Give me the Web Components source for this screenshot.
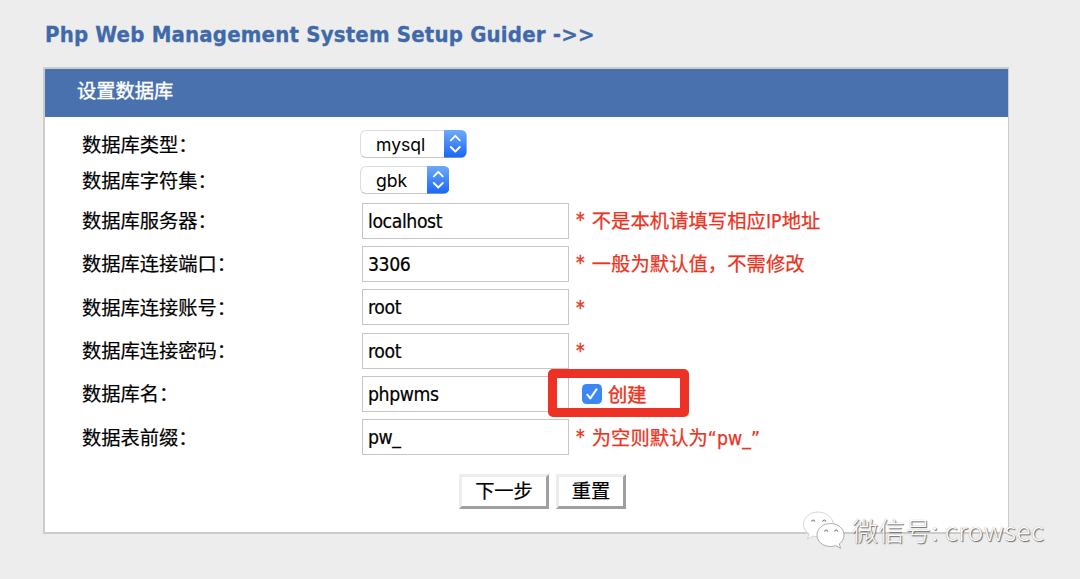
<!DOCTYPE html>
<html lang="zh-CN">
<head>
<meta charset="utf-8">
<title>Php Web Management System Setup Guider</title>
<style>
	body {
		margin: 0;
		background: #ededed;
		font: 19.25px/24px "DejaVu Sans Condensed", "DejaVu Sans", "Noto Sans CJK SC", sans-serif;
		font-stretch: condensed;
		color: #000;
	}
</style>
</head>
<body>
<setup-page heading="Php Web Management System Setup Guider -&gt;&gt;">
	<setup-panel heading="设置数据库">
		<form-row label="数据库类型" size="short"><select-box value="mysql" style="--width: 106.5px"></select-box></form-row>
		<form-row label="数据库字符集" size="short"><select-box value="gbk" style="--width: 89px"></select-box></form-row>
		<form-row label="数据库服务器" style="margin-top: 1px"><text-box value="localhost"></text-box><form-hint>不是本机请填写相应IP地址</form-hint></form-row>
		<form-row label="数据库连接端口"><text-box value="3306"></text-box><form-hint>一般为默认值，不需修改</form-hint></form-row>
		<form-row label="数据库连接账号"><text-box value="root"></text-box><form-hint></form-hint></form-row>
		<form-row label="数据库连接密码"><text-box value="root"></text-box><form-hint></form-hint></form-row>
		<form-row label="数据库名"><text-box value="phpwms"></text-box><check-box>创建</check-box></form-row>
		<form-row label="数据表前缀"><text-box value="pw_"></text-box><form-hint>为空则默认为“pw_”</form-hint></form-row>
		<push-button slot="actions" style="--width: 90px">下一步</push-button>
		<push-button slot="actions" style="--width: 70px">重置</push-button>
	</setup-panel>
	<water-mark slot="overlay">微信号: crowsec</water-mark>
</setup-page>

<script>
/**
 * Base element, renders its template in an open shadow root.
 */
class BaseElement extends HTMLElement {
	constructor() {
		super();

		/**
		 * @type {ShadowRoot}
		 */
		this.shadow = this.attachShadow({ mode: 'open' });
	}

	connectedCallback() {
		this.shadow.innerHTML = this.render();
	}

	/**
	 * @param {string} name - attribute name.
	 * @returns {string}
	 */
	attr(name) {
		return (this.getAttribute(name) || '').replace(/</g, '&lt;');
	}
}

/**
 * Page with a heading and an overlay layer.
 */
class SetupPage extends BaseElement {
	render() {
		return `
    <style>
        :host {
          display: block;
          position: relative;
          box-sizing: border-box;
          height: 579px;
          padding: 20px 71px 0 43px;
          overflow: hidden;
        }
        h1 {
          margin: 0 0 18px 2px;
          font-size: 22px;
          line-height: 29px;
          letter-spacing: 0.18px;
          color: #4069aa;
          -webkit-text-stroke: 0.3px;
          white-space: nowrap;
        }
    </style>
    <h1>${this.attr('heading')}</h1>
    <slot></slot>
    <slot name="overlay"></slot>
    `;
	}
}

/**
 * White panel with a blue title bar.
 */
class SetupPanel extends BaseElement {
	render() {
		return `
    <style>
        :host {
          display: block;
          box-sizing: border-box;
          height: 467px;
          border: 2px solid #cbcccb;
          border-right-width: 1px;
          background: #fff;
        }
        header {
          height: 48px;
          padding-left: 32px;
          background: #4871ae;
          color: #fff;
          line-height: 45px;
          -webkit-text-stroke: 0.4px;
        }
        main {
          padding: 9px 0 0 37px;
        }
        footer {
          display: flex;
          gap: 7px;
          padding: 15px 0 0 414px;
        }
    </style>
    <header>${this.attr('heading')}</header>
    <main><slot></slot></main>
    <footer><slot name="actions"></slot></footer>
    `;
	}
}

/**
 * Label column and control column.
 */
class FormRow extends BaseElement {
	render() {
		return `
    <style>
        :host {
          display: grid;
          grid-template-columns: 278px 1fr;
          align-items: center;
          height: 43.3px;
        }
        :host([size="short"]) {
          height: 36px;
        }
        label {
          padding-top: 3px;
          font-feature-settings: "halt";
          -webkit-text-stroke: 0.2px;
        }
        .field {
          display: flex;
          align-items: center;
        }
    </style>
    <label>${this.attr('label')}：</label>
    <div class="field"><slot></slot></div>
    `;
	}
}

/**
 * Select with the blue stepper cap.
 */
class SelectBox extends BaseElement {
	render() {
		return `
    <style>
        :host {
          display: flex;
          justify-content: space-between;
          box-sizing: border-box;
          width: var(--width);
          height: 28px;
          padding-left: 15px;
          border: 1px solid #dcdcdc;
          border-bottom-color: #c6c6c6;
          border-radius: 6px;
          background: #fff;
          font: 17.6px/27px Inter, sans-serif;
        }
        svg {
          width: 22.5px;
          height: 28px;
          margin: -1px;
          flex: none;
        }
    </style>
    <span>${this.attr('value')}</span>
    <svg viewBox="0 0 22.5 28">
      <defs><linearGradient id="cap" x2="0" y2="1">
        <stop offset="0" stop-color="#6caaf9"/><stop offset="1" stop-color="#1a67f5"/>
      </linearGradient></defs>
      <path d="M0 0H17a5.5 5.5 0 0 1 5.5 5.5V22a5.5 5.5 0 0 1-5.5 5.5H0z" fill="url(#cap)"/>
      <path d="M6.8 10.3L11.3 5.8l4.5 4.5M6.8 17l4.5 4.5 4.5-4.5" fill="none" stroke="#fff" stroke-width="1.9" stroke-linecap="round" stroke-linejoin="round"/>
    </svg>
    `;
	}
}

/**
 * Single line text field.
 */
class TextBox extends BaseElement {
	render() {
		return `
    <style>
        :host {
          display: block;
          box-sizing: border-box;
          width: 207px;
          height: 36px;
          margin-left: 2px;
          padding-left: 5px;
          border: 1px solid #c6c6c6;
          background: #fff;
          line-height: 36px;
          letter-spacing: -0.4px;
          -webkit-text-stroke: 0.2px;
        }
    </style>
    ${this.attr('value')}
    `;
	}
}

/**
 * Red note after a field, led by the required mark.
 */
class FormHint extends BaseElement {
	render() {
		return `
    <style>
        :host {
          display: flex;
          gap: 7px;
          margin-left: 7px;
          padding-top: 3px;
          color: #e93323;
          letter-spacing: 0.1px;
          white-space: nowrap;
          -webkit-text-stroke: 0.25px;
        }
        .mark {
          margin-top: -2px;
          -webkit-text-stroke: 0.4px;
        }
    </style>
    <span class="mark">*</span>
    <span><slot></slot></span>
    `;
	}
}

/**
 * Checked box and its label, with a red marker frame laid over it.
 */
class CheckBox extends BaseElement {
	render() {
		return `
    <style>
        :host {
          display: flex;
          position: relative;
          align-items: center;
          gap: 6px;
          margin-left: 13px;
          color: #e93323;
        }
        svg {
          width: 20px;
          height: 20px;
        }
        span {
          padding-top: 2px;
          margin-bottom: -2px;
          -webkit-text-stroke: 0.4px;
        }
        .frame {
          position: absolute;
          left: -34px;
          top: -12.5px;
          box-sizing: border-box;
          width: 141px;
          height: 48px;
          border: 9px solid #ed3125;
          border-radius: 5px;
        }
    </style>
    <svg viewBox="0 0 20 20">
      <rect width="20" height="20" rx="4.5" fill="#3d87f5"/>
      <path d="M5.3 10.7l3 3.7 6.2-9" fill="none" stroke="#fff" stroke-width="2" stroke-linecap="round" stroke-linejoin="round"/>
    </svg>
    <span><slot></slot></span>
    <div class="frame"></div>
    `;
	}
}

/**
 * Bevelled button.
 */
class PushButton extends BaseElement {
	render() {
		return `
    <style>
        :host {
          display: block;
          box-sizing: border-box;
          width: var(--width);
          height: 35px;
          border: 3px solid;
          border-color: #ededed #a0a0a0 #a0a0a0 #ededed;
          background: #fff;
          line-height: 29px;
          text-align: center;
          -webkit-text-stroke: 0.2px;
        }
    </style>
    <slot></slot>
    `;
	}
}

/**
 * Chat logo and account name in the corner.
 */
class WaterMark extends BaseElement {
	render() {
		return `
    <style>
        :host {
          display: flex;
          position: absolute;
          left: 802px;
          top: 510px;
          gap: 6px;
          align-items: center;
          color: #fff;
          font: 300 26px/40px "Noto Sans CJK SC", sans-serif;
          letter-spacing: 0.5px;
          text-shadow: 1px 1px 1px #666, 0 0 1px #999;
          white-space: nowrap;
        }
        svg {
          width: 44px;
          height: 40px;
        }
    </style>
    <svg viewBox="0 0 44 40" fill="#fff" stroke="#999" stroke-width="0.8">
      <path d="M16 2C8 2 1.5 7.3 1.5 14.5c0 4 2 7.3 5.5 9.5L5.5 29l5.5-3c8 2.5 20-1 20.5-11C31 7.3 24 2 16 2z" stroke="#ccc"/>
      <path d="M28.5 13.5C21 13.5 15 18.5 15 25s6 11.5 13.5 11.5c2 0 3.7-.3 5.3-.9l4.7 2.7-1.2-4.5c3-2 4.7-5 4.7-8.8 0-6.5-6-11.5-13.5-11.5z"/>
      <path d="M9.5 11.5q1.7-3 3.5 0M20.5 11.5q1.7-3 3.5 0M22.5 21.5q1.7-3 3.5 0M32.5 21.5q1.7-3 3.5 0" fill="none" stroke="#777" stroke-width="1.2"/>
    </svg>
    <span><slot></slot></span>
    `;
	}
}

window.customElements.define('setup-page', SetupPage);
window.customElements.define('setup-panel', SetupPanel);
window.customElements.define('form-row', FormRow);
window.customElements.define('select-box', SelectBox);
window.customElements.define('text-box', TextBox);
window.customElements.define('form-hint', FormHint);
window.customElements.define('check-box', CheckBox);
window.customElements.define('push-button', PushButton);
window.customElements.define('water-mark', WaterMark);
</script>
</body>
</html>
